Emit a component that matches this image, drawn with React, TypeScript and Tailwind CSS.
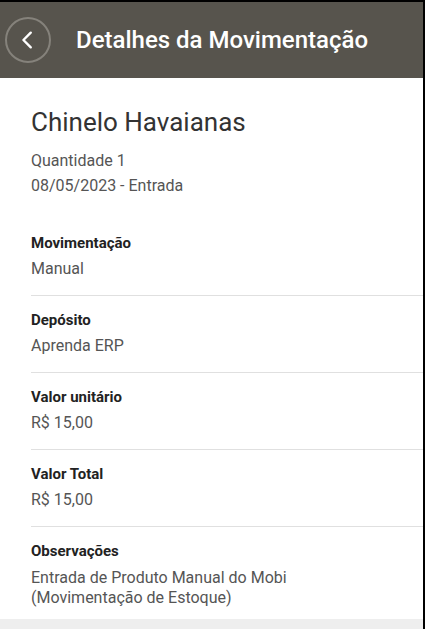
const fields = [
  { label: "Movimentação", value: ["Manual"] },
  { label: "Depósito", value: ["Aprenda ERP"] },
  { label: "Valor unitário", value: ["R$ 15,00"] },
  { label: "Valor Total", value: ["R$ 15,00"] },
  {
    label: "Observações",
    value: ["Entrada de Produto Manual do Mobi", "(Movimentação de Estoque)"],
  },
];

const App = () => {
  return (
    <div
      className="w-[425px] h-[629px] bg-black pt-[2px] pr-[2px] overflow-hidden"
      style={{ fontFamily: "Roboto, 'Noto Sans', sans-serif" }}
    >
      <div className="flex flex-col h-full bg-white">
        <div className="flex items-center h-[76px] bg-[#57544d] shrink-0">
          <div className="ml-[5px] w-[46px] h-[46px] rounded-full border-2 border-[#85827b] flex items-center justify-center">
            <svg width="22" height="22" viewBox="0 0 24 24" fill="none">
              <path
                d="M15 4 L7 12 L15 20"
                stroke="white"
                strokeWidth="2.6"
                strokeLinecap="round"
                strokeLinejoin="round"
              />
            </svg>
          </div>
          <h1 className="ml-[25px] text-[24px] font-medium text-white">
            Detalhes da Movimentação
          </h1>
        </div>

        <div className="flex-1 pl-[31px] pt-[28px]">
          <h2 className="text-[26px] leading-[32px] text-[#333]">
            Chinelo Havaianas
          </h2>
          <p className="mt-[10px] text-[16px] leading-[25px] text-[#555]">
            Quantidade 1
          </p>
          <p className="text-[16px] leading-[25px] text-[#555]">
            08/05/2023 - Entrada
          </p>

          <div className="mt-[33px]">
            {fields.map((f, i) => (
              <div
                key={f.label}
                className={
                  i < fields.length - 1
                    ? "pb-[14px] mb-[12px] border-b border-[#e0e0e0]"
                    : ""
                }
              >
                <p className="text-[15px] leading-[25px] font-bold text-[#222]">
                  {f.label}
                </p>
                {f.value.length === 1 ? (
                  <p className="text-[16px] leading-[25px] text-[#555]">
                    {f.value[0]}
                  </p>
                ) : (
                  <p className="text-[16px] leading-[20px] mt-[4px] text-[#555]">
                    {f.value.map((v) => (
                      <span key={v} className="block">
                        {v}
                      </span>
                    ))}
                  </p>
                )}
              </div>
            ))}
          </div>
        </div>
        <div className="h-[10px] bg-[#eeeeee] shrink-0" />
      </div>
    </div>
  );
};

export default App;
